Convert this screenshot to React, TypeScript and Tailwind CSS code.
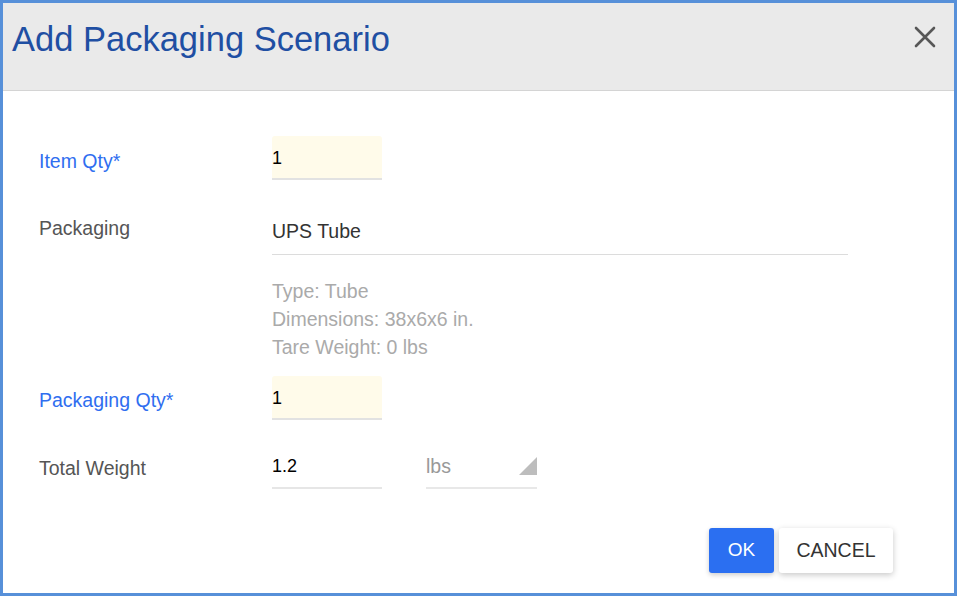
import { useState } from "react";

const font = { fontFamily: '"Liberation Sans", Arial, sans-serif' };

function QtyInput({ value }: { value: string }) {
  return (
    <input
      defaultValue={value}
      className="w-[110px] h-[44px] bg-[#fffbea] rounded-t-[3px] border-b-2 border-[#e2e2e2] px-0 pt-[2px] text-[18px] text-black outline-none"
    />
  );
}

export default function App() {
  const [unit] = useState("lbs");

  return (
    <div
      className="w-[957px] h-[596px] border-[3px] border-[#5790d9] bg-white flex flex-col overflow-hidden"
      style={font}
    >
      {/* Header */}
      <div className="h-[88px] shrink-0 bg-[#eaeaea] border-b border-[#d4d4d4] flex items-start justify-between pl-[9px] pr-[14px]">
        <h1 className="mt-[16px] text-[34.5px] leading-[40px] text-[#1f4fa3]">Add Packaging Scenario</h1>
        <button className="mt-[19px] w-[30px] h-[30px] flex items-center justify-center">
          <svg width="22" height="22" viewBox="0 0 22 22">
            <path d="M2 2 L20 20 M20 2 L2 20" stroke="#575757" strokeWidth="2.6" strokeLinecap="round" />
          </svg>
        </button>
      </div>

      {/* Body */}
      <div className="flex-1 pl-[36px] pr-[61px] pt-[45px] text-[19.5px]">
        <div className="flex items-center">
          <div className="w-[233px] pt-[8px] text-[#2f6ef0]">Item Qty*</div>
          <QtyInput value="1" />
        </div>

        <div className="flex items-center mt-[26px]">
          <div className="w-[233px] -mt-[4px] text-[#555]">Packaging</div>
          <div className="w-[576px] h-[49px] border-b border-[#dcdcdc] flex items-center text-[#333] pt-[3px]">
            UPS Tube
          </div>
        </div>

        <div className="ml-[233px] mt-[22px] text-[#aaaaaa] leading-[28px]">
          <div>Type: Tube</div>
          <div>Dimensions: 38x6x6 in.</div>
          <div>Tare Weight: 0 lbs</div>
        </div>

        <div className="flex items-center mt-[15px]">
          <div className="w-[233px] pt-[6px] text-[#2f6ef0]">Packaging Qty*</div>
          <QtyInput value="1" />
        </div>

        <div className="flex items-center mt-[24px]">
          <div className="w-[233px] pt-[4px] text-[#555]">Total Weight</div>
          <input
            defaultValue="1.2"
            className="w-[110px] h-[44px] border-b-2 border-[#e6e6e6] pt-[1px] text-[18px] text-black outline-none"
          />
          <div className="ml-[44px] w-[111px] h-[45px] border-b-2 border-[#e8e8e8] relative flex items-center pt-[2px] text-[#999]">
            {unit}
            <svg className="absolute right-0 top-[13px]" width="18" height="18" viewBox="0 0 18 18">
              <path d="M18 0 L18 18 L0 18 Z" fill="#bdbdbd" />
            </svg>
          </div>
        </div>

        <div className="flex justify-end gap-[5px] mt-[39px]">
          <button className="w-[65px] h-[45px] rounded-[3px] bg-[#2b6ff1] text-white text-[19px] shadow-[0_2px_5px_rgba(0,0,0,0.2)]">
            OK
          </button>
          <button className="w-[114px] h-[45px] rounded-[3px] bg-white text-[#333] text-[19.5px] shadow-[0_2px_6px_rgba(0,0,0,0.22)]">
            CANCEL
          </button>
        </div>
      </div>
    </div>
  );
}
